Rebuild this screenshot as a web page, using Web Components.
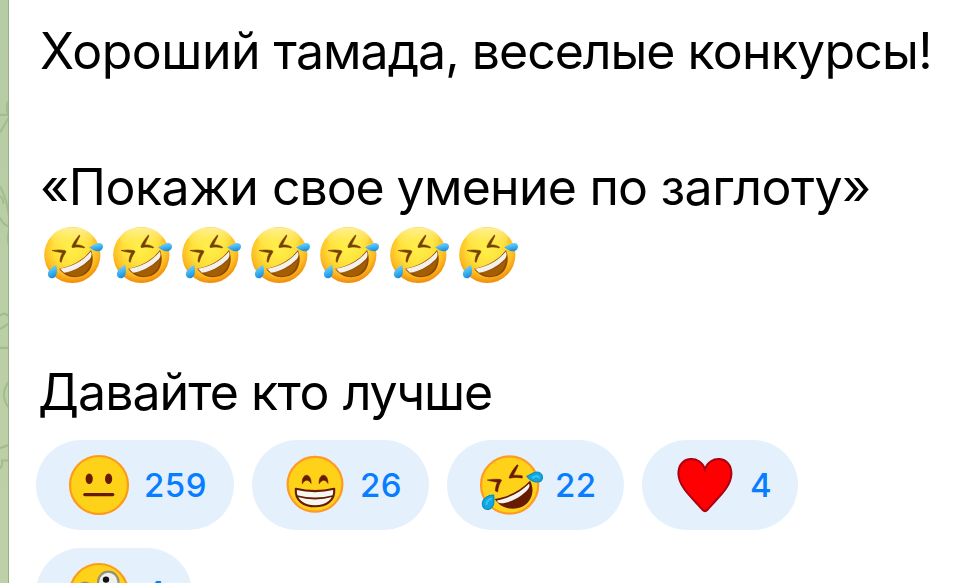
<!DOCTYPE html>
<html lang="ru">
<head>
<meta charset="utf-8">
<title>Сообщение</title>
<style>
html,body{margin:0;height:100%;overflow:hidden;background:#fff;font-family:Inter,"Liberation Sans",sans-serif}
</style>
</head>
<body>
<chat-view>
  <chat-message>
    <message-line><span style="letter-spacing:-.5px">Хороший </span><span style="letter-spacing:-.96px">тамада, </span><span style="letter-spacing:-1.03px">веселые </span><span style="letter-spacing:-.75px">конкурсы!</span></message-line>
    <message-line></message-line>
    <message-line><span style="letter-spacing:-.44px">«Покажи </span><span style="letter-spacing:-1.1px">свое </span><span style="letter-spacing:-.75px">умение </span><span style="letter-spacing:-.8px">по </span><span style="letter-spacing:-.57px">заглоту»</span></message-line>
    <message-line><emoji-row count="7"></emoji-row></message-line>
    <message-line></message-line>
    <message-line style="margin-left:-2px"><span style="letter-spacing:-.95px">Давайте </span><span style="letter-spacing:-.5px">кто </span><span style="letter-spacing:-1.1px">лучше</span></message-line>
    <reaction-list slot="reactions">
      <reaction-pill icon="neutral" style="width:198px">259</reaction-pill>
      <reaction-pill icon="grin" style="width:177px">26</reaction-pill>
      <reaction-pill icon="rofl" style="width:177px">22</reaction-pill>
      <reaction-pill icon="heart" style="width:156px">4</reaction-pill>
      <reaction-pill icon="zany" style="width:156px">4</reaction-pill>
    </reaction-list>
  </chat-message>
</chat-view>
<script>
const define = (name, html, setup) => customElements.define(name, class extends HTMLElement {
  constructor() {
    super();
    this.attachShadow({mode: 'open'}).innerHTML = html;
  }
  connectedCallback() { if (setup) setup(this, this.shadowRoot); }
});

const icons = {
  neutral: `<circle cx="33" cy="30" r="29" fill="#ffd21a" stroke="#ff9a17" stroke-width="2.2"/>
    <ellipse cx="23.2" cy="23.7" rx="3.6" ry="5.3" fill="#671b00"/><ellipse cx="42.6" cy="23.7" rx="3.6" ry="5.3" fill="#671b00"/>
    <path d="M18.8 39.6H46.8" stroke="#671b00" stroke-width="3.2" stroke-linecap="round"/>`,
  grin: `<circle cx="33" cy="29.3" r="27.4" fill="#ffd21a" stroke="#ff9a24" stroke-width="2.2"/>
    <path d="M20.3 28.8C19.5 17.5 29.3 17.3 29.1 28.4C26.4 24.1 22.9 24.2 20.3 28.8ZM37.2 28.8C36.4 17.5 46.2 17.3 46 28.4C43.3 24.1 39.8 24.2 37.2 28.8Z" fill="#671b00" stroke="#671b00" stroke-width=".6"/>
    <path d="M13.8 33.8C26 36.8 40 36.8 52.2 33.8C53.3 46 43.5 51.3 33 51.3C22.4 51.3 12.8 46 13.8 33.8Z" fill="#f7f7f2" stroke="#671b00" stroke-width="2.1" stroke-linejoin="round"/>
    <path d="M14.8 41C27 44.3 39.5 44.2 51 41" fill="none" stroke="#671b00" stroke-width="1.8"/>`,
  rofl: `<circle cx="32.6" cy="30" r="28.6" fill="#ffd21a" stroke="#ff9a24" stroke-width="2.2"/>
    <path d="M10.2 25C15 24.1 20 23.9 23.8 24.6C24.7 25 24.6 25.8 23.9 26.6C22.3 29 21.3 32 20.6 37L18.2 35.8C18.6 32.1 19.2 29.6 20.4 27.3C17.2 26.6 13.4 26.3 10.2 25ZM40.1 9.7C37 13.2 33.2 18.8 32.2 22.3C32 23.1 32.4 23.3 33.1 23.2C36.4 22.3 40.6 22.4 45.4 23.1L45.2 20.8C42 20.2 39 20 36.4 20.5C37.8 17 40.1 13.7 41.2 10.3Z" fill="#671b00" stroke="#671b00" stroke-width=".5"/>
    <path d="M17.7 44C32 41.5 43 36 53 25.7C58 34.3 55.3 46 46.6 51C37 56 24.5 54.4 17.7 44Z" fill="#671b00"/>
    <path d="M20 45.4C33 42.7 43 37.5 52 28.7C53.3 30.8 52.2 33.3 49.5 36C42.6 43 32 48 24.3 48.2C21.6 48.2 20.3 47.1 20 45.4Z" fill="#f5f5ef"/>
    <path d="M50 21.3C54 19.7 56.6 16.6 60.6 17C64.7 17.4 66.2 21.6 65 24.5C62.9 28.7 54.7 27.5 50 21.3ZM16.6 40.2C11.5 40 5.6 43.3 5.4 48.6C5.2 53 9 55.3 12.4 54.1C17.2 52.2 17.6 47 16.6 40.2Z" fill="#13a5df" stroke="#0b8fc0" stroke-width="1.2"/>
    <path d="M56 22.5C59 20.3 61.3 20.8 61.8 22.5M9.5 49C9.8 46.5 12 44.7 14 43.8" stroke="#33c4f2" stroke-width="2.2" fill="none" stroke-linecap="round"/>`,
  heart: `<path d="M33 15.2C29 .6 6 .7 6.4 19.5C6.7 33.5 22 45.1 30.5 55.6C32.3 57.4 33.8 57.4 35.5 55.6C44 45.1 59.3 33.5 59.4 19.5C59.6 .7 37 .6 33 15.2Z" transform="translate(0 -.8)" fill="#fe0002" stroke="#ac0010" stroke-width="2"/>`,
  zany: `<circle cx="33" cy="30" r="29" fill="#ffd21a" stroke="#ff9a17" stroke-width="2.2"/>
    <circle cx="42.3" cy="18.9" r="10.2" fill="#efefef" stroke="#999078" stroke-width="2.2"/><circle cx="40" cy="16.6" r="3.2" fill="#111"/>
    <circle cx="19" cy="27" r="7.4" fill="#efefef" stroke="#999078" stroke-width="2.2"/>`
};

const laughing = `<svg width="60" height="58" viewBox="0 0 60 58">
  <defs><radialGradient id="face" cx=".48" cy=".38" r=".62"><stop offset="0" stop-color="#fff04a"/><stop offset=".5" stop-color="#ffe03a"/><stop offset=".78" stop-color="#fdbd22"/><stop offset="1" stop-color="#f0890b"/></radialGradient>
  <linearGradient id="shine" x2="0" y2="1"><stop offset="0" stop-color="#fff8c0" stop-opacity=".75"/><stop offset="1" stop-color="#fff04a" stop-opacity="0"/></linearGradient>
  <linearGradient id="tear" x2=".3" y2="1"><stop offset="0" stop-color="#86dcff"/><stop offset=".5" stop-color="#4cbcf3"/><stop offset="1" stop-color="#1b92e0"/></linearGradient></defs>
  <circle cx="28.3" cy="29" r="28.1" fill="url(#face)"/><ellipse cx="28" cy="12" rx="21" ry="10.5" fill="url(#shine)"/>
  <path d="M8 24.5C13 23.9 17.3 23.8 21 24.6C22.2 25 22 26 21.3 27C19.5 29.6 18.2 32.5 17.2 36.3L16 35.6C16.2 32 17 29.1 18.6 26.7C15 26.1 11.2 25.7 8 24.5ZM35.4 9C32.6 12.3 29.3 16.8 28 20.2C27.6 21.6 28.5 21.9 29.6 21.5C33 20.7 36.5 20.9 40.2 22L40.4 21C37.4 19.2 34.8 18.7 31.6 19C32.6 15.8 34.8 13 36 9.6Z" fill="#744000" stroke="#744000" stroke-width=".6"/>
  <path d="M15.2 42.7C29 40 40 33.5 47 24C51.2 35 47.5 46.5 38 50C29 53 20 50 15.2 42.7Z" fill="#8c4900"/>
  <path d="M22 46.5C28 52 36 51.2 41.5 46C45 42.6 46.8 38 47 33.5C39 41 31 45 22 46.5Z" fill="#a35e03"/>
  <path d="M16 42.8C30 40.2 40 34 46.8 25.5C48 28 47.8 30.5 46 33C38 41 28.5 45.7 20 46.8Z" fill="#f3f0ed"/>
  <path d="M45 21.2C50 19 52.5 16.4 56 17C59.3 17.7 60 21.4 57.4 24C54.2 26.9 50 24.7 45 21.2Z" fill="url(#tear)"/>
  <path d="M12.2 39.1C6.5 42 3.4 45.4 4 49.3C4.8 52.6 9 53.4 11.4 50.4C14 47.2 12.8 43 12.2 39.1Z" fill="url(#tear)"/>
</svg>`;

define('chat-view', `<style>
  :host{display:grid;grid-template-columns:9px 1fr;width:961px;height:583px;overflow:hidden}
  svg{display:block}
</style>
<svg width="9" height="583" viewBox="0 0 9 583"><defs><linearGradient id="bg" x2="0" y2="1"><stop stop-color="#b6cca5"/><stop offset="1" stop-color="#bed0a8"/></linearGradient></defs>
<rect width="9" height="583" fill="url(#bg)"/>
<g fill="none" stroke="#a2bd8c" stroke-width="2" transform="scale(1 1.115)"><path d="M0 103H9M0 119L9 105M8 91Q5 98 9 104M0 167Q7 179 9 194M0 176Q4 178 3 183M0 195Q3 202 9 203M10 204Q6 212 9 220M0 283Q5 279 9 284M0 295L9 290M0 312H9M9 342Q-1 354 9 366M0 402L9 399M0 420Q3 418 2 413H9"/></g>
<path d="M8.5 0V583" stroke="#98af85"/></svg><slot></slot>`);

define('chat-message', `<style>
  :host{display:flex;flex-direction:column;padding-top:16.8px;background:#fff;color:#000;min-width:0}
  .text{padding-left:31px;height:423.2px;box-sizing:border-box}
</style><div class="text"><slot></slot></div><slot name="reactions"></slot>`);

define('message-line', `<style>
  :host{display:block;height:68.3px;line-height:68.3px;font-size:50px;white-space:pre}
</style><slot></slot>`);

define('emoji-row', `<style>:host{display:flex;padding:4.5px 0 0 4.3px}svg{margin-right:9.05px;flex:none}</style>`,
  (el, root) => root.innerHTML += laughing.repeat(+el.getAttribute('count')));

define('reaction-list', `<style>:host{display:flex;flex-wrap:wrap;gap:18px;padding-left:27px;width:830px}</style><slot></slot>`);

define('reaction-pill', `<style>
  :host{display:flex;align-items:center;box-sizing:border-box;height:90px;padding-left:30px;gap:14px;border-radius:45px;background:#e4f1fd;color:#087dff;font-size:33px;font-weight:450;letter-spacing:.5px;line-height:40px}
  svg{flex:none;overflow:visible}
  span{padding-top:1px}
</style><svg width="64" height="60" viewBox="0 0 64 60"></svg><span><slot></slot></span>`,
  (el, root) => root.querySelector('svg').innerHTML = icons[el.getAttribute('icon')]);
</script>
</body>
</html>
